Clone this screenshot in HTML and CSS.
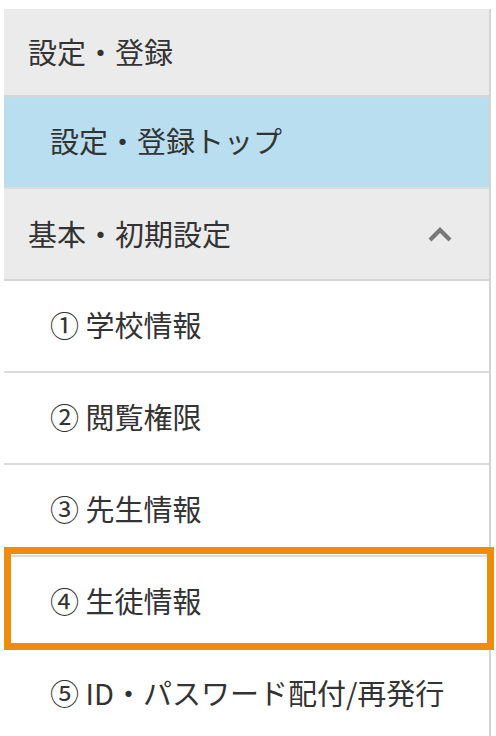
FILE: index.html
```html
<!DOCTYPE html>
<html lang="ja">
<head>
    <meta charset="utf-8">
    <title>設定・登録</title>
    <link rel="stylesheet" href="styles.css">
</head>
<body>
    <nav class="side-menu">
        <div class="menu-head menu-head-first">設定・登録</div>
        <a class="menu-item menu-top is-current" href="#">設定・登録トップ</a>

        <div class="menu-head">
            <span>基本・初期設定</span>
            <svg class="toggle-icon" width="26" height="18" viewBox="0 0 26 18">
                <polyline points="3,15 13,5 23,15" fill="none" stroke="#777777" stroke-width="4.2" stroke-linejoin="miter"/>
            </svg>
        </div>

        <ul class="sub-list">
            <li class="menu-item">① 学校情報</li>
            <li class="menu-item">② 閲覧権限</li>
            <li class="menu-item">③ 先生情報</li>
            <li class="menu-item is-marked">④ 生徒情報</li>
            <li class="menu-item">⑤ ID・パスワード配付/再発行</li>
        </ul>
    </nav>
</body>
</html>
```

FILE: styles.css
```css
body {
    margin: 0;
    padding: 9px 0 0 4px;
    background-color: #ffffff;
    font-family: 'Noto Sans CJK JP', 'Noto Sans', sans-serif;
    color: #333333;
}

.side-menu {
    width: 487px;
    box-sizing: border-box;
    border-right: 2px solid #d4d4d4;
}

.menu-head {
    display: flex;
    align-items: center;
    justify-content: space-between;
    height: 92px;
    box-sizing: border-box;
    padding: 0 36px 3px 24px;
    background-color: #ebebeb;
    border-bottom: 2px solid #d6d6d6;
    font-size: 29px;
}

.menu-head-first {
    height: 88px;
}

.toggle-icon {
    display: block;
    margin-top: 3px;
}

.menu-item {
    display: flex;
    align-items: center;
    height: 92px;
    box-sizing: border-box;
    padding: 0 0 4px 46px;
    border-bottom: 2px solid #dcdcdc;
    font-size: 29px;
    color: #333333;
    text-decoration: none;
}

.menu-top.is-current {
    background-color: #b8def0;
}

.sub-list {
    list-style: none;
    margin: 0;
    padding: 0;
}

/* 強調枠 */
.is-marked {
    position: relative;
}

.is-marked::after {
    content: '';
    position: absolute;
    top: -10px;
    left: 0;
    right: -5px;
    bottom: -3px;
    border: 7px solid #ef8c0c;
}
```
